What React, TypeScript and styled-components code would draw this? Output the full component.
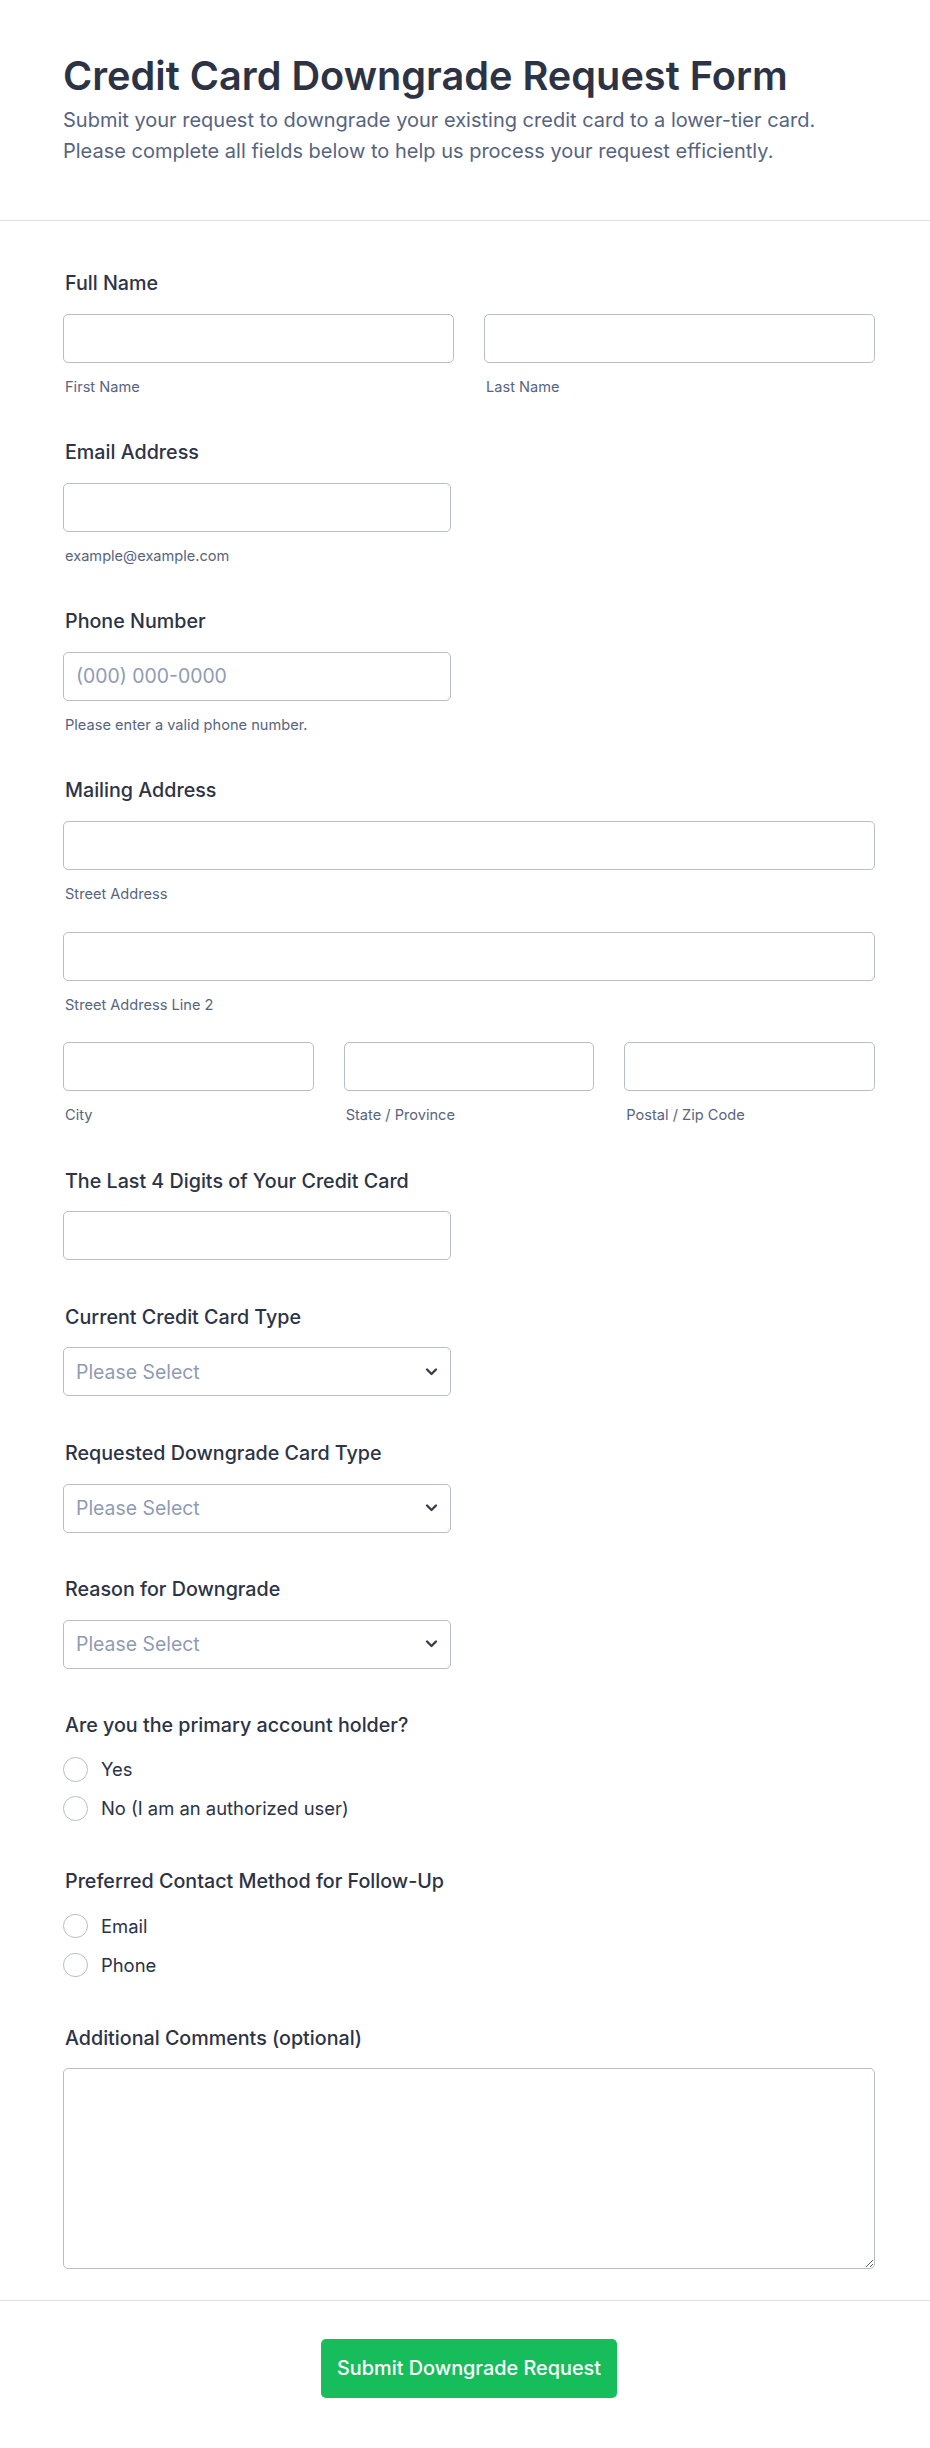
import React from "react";
import styled, { createGlobalStyle } from "styled-components";

const GlobalStyle = createGlobalStyle`
  *, *::before, *::after { box-sizing: border-box; }
  html, body { margin: 0; padding: 0; background: #ffffff; }
  body {
    font-family: Inter, "Noto Sans", "Liberation Sans", sans-serif;
    color: #2c3345;
    -webkit-font-smoothing: antialiased;
  }
`;

const ink = "#2c3345";
const muted = "#57647e";
const fieldBorder = "#b8bdc9";
const placeholder = "#8f9bb3";
const rule = "#dde0e8";

const Page = styled.div`
  width: 100%;
  background: #ffffff;
`;

const Header = styled.header`
  padding: 53px 55px 52px 63px;
  border-bottom: 1px solid ${rule};
`;

const Title = styled.h1`
  margin: 0;
  font-size: 39.7px;
  font-weight: 600;
  line-height: 1.2;
  color: ${ink};
`;

const Intro = styled.p`
  margin: 4px 0 0;
  max-width: 812px;
  font-size: 20px;
  font-weight: 400;
  line-height: 31.7px;
  color: ${muted};
`;

const Form = styled.form`
  display: flex;
  flex-direction: column;
  gap: 45.5px;
  padding: 51px 55px 31px 63px;
`;

const Field = styled.div`
  display: flex;
  flex-direction: column;
  width: 812px;
`;

const Label = styled.label`
  display: block;
  margin-bottom: 18px;
  padding-left: 2px;
  font-size: 19.7px;
  font-weight: 500;
  line-height: 1.2;
  color: ${ink};
`;

const Columns = styled.div<{ $count: number }>`
  display: grid;
  grid-template-columns: repeat(${(p) => p.$count}, 1fr);
  column-gap: 30px;
`;

const Stack = styled.div`
  display: flex;
  flex-direction: column;
  gap: 28.5px;
`;

const Part = styled.div<{ $half?: boolean }>`
  display: flex;
  flex-direction: column;
  width: ${(p) => (p.$half ? "388px" : "100%")};
`;

const TextInput = styled.input`
  display: block;
  width: 100%;
  height: 49px;
  margin: 0;
  padding: 0 12px;
  border: 1px solid ${fieldBorder};
  border-radius: 5px;
  background: #ffffff;
  font-family: inherit;
  font-size: 19.4px;
  color: ${ink};
  outline: none;

  &::placeholder {
    color: ${placeholder};
    opacity: 1;
  }
`;

const SubLabel = styled.span`
  display: block;
  margin-top: 16px;
  padding-left: 2px;
  font-size: 14.6px;
  line-height: 17px;
  color: ${muted};
`;

const SelectBox = styled.div`
  position: relative;
  width: 388px;
`;

const Select = styled.select`
  display: block;
  width: 100%;
  height: 49px;
  margin: 0;
  padding: 0 40px 0 12px;
  border: 1px solid ${fieldBorder};
  border-radius: 5px;
  background: #ffffff;
  font-family: inherit;
  font-size: 19.4px;
  color: ${placeholder};
  appearance: none;
  -webkit-appearance: none;
  outline: none;
`;

const Chevron = styled.svg`
  position: absolute;
  right: 13px;
  top: 50%;
  width: 13px;
  height: 9px;
  transform: translateY(-50%);
  pointer-events: none;
`;

const RadioList = styled.div`
  display: flex;
  flex-direction: column;
  gap: 14.4px;
  padding: 1.5px 0 4px;
`;

const RadioRow = styled.label`
  display: flex;
  align-items: center;
  gap: 13.4px;
  font-size: 18.4px;
  line-height: 24.6px;
  color: ${ink};
`;

const Radio = styled.input.attrs({ type: "radio" })`
  appearance: none;
  -webkit-appearance: none;
  flex: none;
  width: 24.6px;
  height: 24.6px;
  margin: 0;
  border: 1.4px solid ${fieldBorder};
  border-radius: 50%;
  background: #ffffff;
`;

const TextArea = styled.textarea`
  display: block;
  width: 100%;
  height: 200.7px;
  margin: 0;
  padding: 12px;
  border: 1px solid ${fieldBorder};
  border-radius: 5px;
  background: #ffffff;
  font-family: inherit;
  font-size: 19.4px;
  color: ${ink};
  outline: none;
`;

const Footer = styled.footer`
  display: flex;
  justify-content: center;
  width: 930px;
  padding: 38px 55px 50px 63px;
  border-top: 1px solid ${rule};
`;

const SubmitButton = styled.button`
  height: 59px;
  padding: 0 16.5px;
  border: none;
  border-radius: 5px;
  background: #18bd5b;
  font-family: inherit;
  font-size: 19.85px;
  font-weight: 500;
  color: #ffffff;
  cursor: pointer;
`;

function ChevronDown() {
  return (
    <Chevron viewBox="0 0 13 9" fill="none">
      <path
        d="M2 2L6.5 6.5L11 2"
        stroke="#343c52"
        strokeWidth="2.3"
        strokeLinecap="round"
        strokeLinejoin="round"
      />
    </Chevron>
  );
}

function DropDown({ id }: { id: string }) {
  return (
    <SelectBox>
      <Select id={id} defaultValue="">
        <option value="" disabled>
          Please Select
        </option>
      </Select>
      <ChevronDown />
    </SelectBox>
  );
}

function RadioGroup({ name, options }: { name: string; options: string[] }) {
  return (
    <RadioList>
      {options.map((o) => (
        <RadioRow key={o}>
          <Radio name={name} value={o} />
          {o}
        </RadioRow>
      ))}
    </RadioList>
  );
}

export default function App() {
  return (
    <Page>
      <GlobalStyle />
      <Header>
        <Title>Credit Card Downgrade Request Form</Title>
        <Intro>
          Submit your request to downgrade your existing credit card to a lower-tier card. Please
          complete all fields below to help us process your request efficiently.
        </Intro>
      </Header>

      <Form onSubmit={(e) => e.preventDefault()}>
        <Field>
          <Label>Full Name</Label>
          <Columns $count={2}>
            <Part>
              <TextInput />
              <SubLabel>First Name</SubLabel>
            </Part>
            <Part>
              <TextInput />
              <SubLabel>Last Name</SubLabel>
            </Part>
          </Columns>
        </Field>

        <Field>
          <Label htmlFor="email">Email Address</Label>
          <Part $half>
            <TextInput id="email" type="email" />
            <SubLabel>example@example.com</SubLabel>
          </Part>
        </Field>

        <Field>
          <Label htmlFor="phone">Phone Number</Label>
          <Part $half>
            <TextInput id="phone" type="tel" placeholder="(000) 000-0000" />
            <SubLabel>Please enter a valid phone number.</SubLabel>
          </Part>
        </Field>

        <Field>
          <Label>Mailing Address</Label>
          <Stack>
            <Part>
              <TextInput />
              <SubLabel>Street Address</SubLabel>
            </Part>
            <Part>
              <TextInput />
              <SubLabel>Street Address Line 2</SubLabel>
            </Part>
            <Columns $count={3}>
              <Part>
                <TextInput />
                <SubLabel>City</SubLabel>
              </Part>
              <Part>
                <TextInput />
                <SubLabel>State / Province</SubLabel>
              </Part>
              <Part>
                <TextInput />
                <SubLabel>Postal / Zip Code</SubLabel>
              </Part>
            </Columns>
          </Stack>
        </Field>

        <Field>
          <Label htmlFor="last4">The Last 4 Digits of Your Credit Card</Label>
          <Part $half>
            <TextInput id="last4" inputMode="numeric" />
          </Part>
        </Field>

        <Field>
          <Label htmlFor="current">Current Credit Card Type</Label>
          <DropDown id="current" />
        </Field>

        <Field>
          <Label htmlFor="requested">Requested Downgrade Card Type</Label>
          <DropDown id="requested" />
        </Field>

        <Field>
          <Label htmlFor="reason">Reason for Downgrade</Label>
          <DropDown id="reason" />
        </Field>

        <Field>
          <Label>Are you the primary account holder?</Label>
          <RadioGroup name="holder" options={["Yes", "No (I am an authorized user)"]} />
        </Field>

        <Field>
          <Label>Preferred Contact Method for Follow-Up</Label>
          <RadioGroup name="contact" options={["Email", "Phone"]} />
        </Field>

        <Field>
          <Label htmlFor="comments">Additional Comments (optional)</Label>
          <TextArea id="comments" />
        </Field>
      </Form>

      <Footer>
        <SubmitButton type="button">Submit Downgrade Request</SubmitButton>
      </Footer>
    </Page>
  );
}
